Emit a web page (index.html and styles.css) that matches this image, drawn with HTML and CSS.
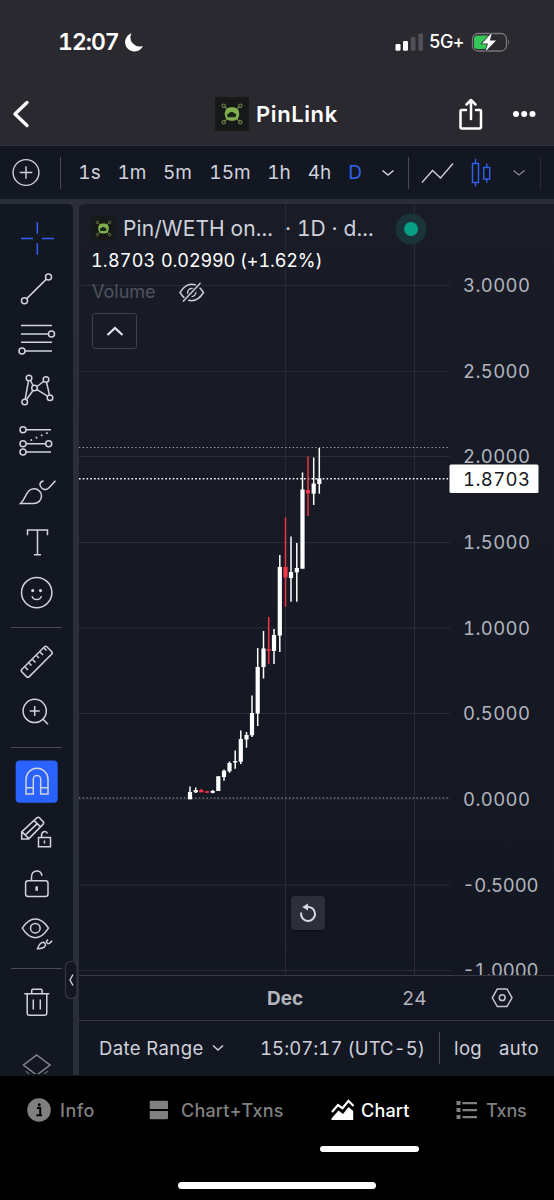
FILE: index.html
```html
<!DOCTYPE html>
<html lang="en">
<head>
<meta charset="utf-8">
<title>PinLink chart</title>
<link rel="stylesheet" href="styles.css">
</head>
<body>
<svg width="0" height="0" class="defs">
  <symbol id="pin" viewBox="0 0 34 34">
    <rect width="34" height="34" rx="2" fill="#171918"/>
    <g fill="none" stroke="#6f7f45" stroke-width="1.1">
      <path d="M9.500 9.500l4 4M24.500 9.500l-4 4M9.500 24.500l4-4M24.500 24.500l-4-4"/>
      <circle cx="8.700" cy="8.700" r="1.700"/><circle cx="25.300" cy="8.700" r="1.700"/><circle cx="8.700" cy="25.300" r="1.700"/><circle cx="25.300" cy="25.300" r="1.700"/>
    </g>
    <rect x="9.800" y="10.200" width="14.400" height="13.600" rx="6" fill="#80b04f"/>
    <path d="M13 20.300q-2.200-1.800 0-3.500 1.500-.3 2-1.500 2.500-1.500 4.300 1 2.500.3 1.700 2.800l-1 1.200z" fill="#17251a"/>
  </symbol>
</svg>
<div class="phone">
  <header class="top">
    <div class="status">
      <div class="clock"><span class="time">12:07</span>
        <svg width="20" height="20" viewBox="124 31 20 20"><path d="M131.500 32.300a9.300 9.300 0 1 0 11.500 12.400 9 9 0 0 1-11.500-12.400z" fill="#fff"/></svg>
      </div>
      <div class="signal">
        <svg width="30" height="20" viewBox="393 31 30 20"><rect x="394.500" y="43" width="5" height="6.800" rx="1.300" fill="#fff"/><rect x="402" y="40" width="5" height="9.800" rx="1.300" fill="#fff"/><rect x="409.800" y="36" width="4.700" height="13.800" rx="1.300" fill="#515056"/><rect x="417.300" y="32.500" width="4.700" height="17.300" rx="1.300" fill="#515056"/></svg>
        <span class="net">5G+</span>
        <svg width="40" height="22" viewBox="471 30 40 22"><rect x="472.500" y="32.500" width="34" height="17.500" rx="5.500" fill="none" stroke="#77767b" stroke-width="1.300"/><path d="M477.500 34.500H488V48H477.500a3.500 3.500 0 0 1-3.500-3.500V38a3.500 3.500 0 0 1 3.500-3.500z" fill="#36c759"/><path d="M508.300 38.500q2.200 2.600 0 5z" fill="#77767b"/><path d="M492 31.500l-10 11h6l-2.500 8 10.500-11h-6.200z" fill="#fff" stroke="#2a292f" stroke-width="1.500" paint-order="stroke"/></svg>
      </div>
    </div>
    <div class="title">
      <svg width="40" height="34" viewBox="0 97 40 34"><path d="M27 102.500L15 114l12 11.500" fill="none" stroke="#fff" stroke-width="3.300" stroke-linecap="round" stroke-linejoin="round"/></svg>
      <div class="name"><svg width="34" height="34"><use href="#pin"/></svg><span>PinLink</span></div>
      <div class="acts">
        <svg width="28" height="34" viewBox="457 97 28 34" fill="none" stroke="#fff" stroke-width="2.500" stroke-linecap="round" stroke-linejoin="round"><path d="M466 110h-4.500q-1 0-1 1v16q0 1.500 1.500 1.500h17.500q1.500 0 1.500-1.500v-16q0-1-1-1H476M471 119v-18.500M466.500 104.500l4.500-4.500 4.500 4.500"/></svg>
        <svg width="26" height="8" viewBox="511 110 26 8" fill="#fff"><circle cx="516" cy="114" r="3"/><circle cx="524.200" cy="114" r="3"/><circle cx="532.500" cy="114" r="3"/></svg>
      </div>
    </div>
  </header>

  <nav class="intervals">
    <svg width="30" height="30" viewBox="11 157 30 30" fill="none" stroke="#d0d3de" stroke-width="1.400"><circle cx="26" cy="171.500" r="12.900"/><path d="M26 165.200v12.600M19.700 171.500h12.600"/></svg>
    <i class="bar"></i>
    <span>1s</span><span>1m</span><span>5m</span><span>15m</span><span>1h</span><span>4h</span><span class="on">D</span>
    <svg width="14" height="8" viewBox="0 0 14 8"><path d="M1.500 1.500L7 6l5.500-4.500" fill="none" stroke="#d0d3de" stroke-width="1.500"/></svg>
    <i class="bar"></i>
    <svg width="34" height="24" viewBox="422 160 34 24"><path d="M423 181.500l10.500-12 8 7.500 12.500-14.500" fill="none" stroke="#d0d3de" stroke-width="1.300"/></svg>
    <svg width="22" height="30" viewBox="470 157 22 30" fill="none" stroke="#3161ef" stroke-width="1.400"><rect x="472.500" y="162.500" width="6" height="19"/><rect x="483.700" y="166.500" width="6" height="11.500"/><path d="M475.500 158v4.500m0 19v4M486.700 162.500v4m0 11.500v3.500"/></svg>
    <svg width="14" height="8" viewBox="0 0 14 8"><path d="M1.500 1.500L7 6l5.500-4.500" fill="none" stroke="#888b94" stroke-width="1.300"/></svg>
    <i class="bar dim"></i>
  </nav>

  <main class="work">
    <aside class="tools">
      <svg class="tool" viewBox="0 213.200 74 50.600"><path class="blue" d="M21 238.700h12M42 238.700h12M37.300 222.500V234M37.300 243.500V255"/></svg>
      <svg class="tool" viewBox="0 263.800 74 50.600"><path d="M26.700 298.400l19.700-19.500"/><circle cx="24.500" cy="300.500" r="3"/><circle cx="48.500" cy="276.700" r="3"/></svg>
      <svg class="tool" viewBox="0 314.400 74 50.600"><path d="M21 326h31M21 334.500h27.500M21 342.700h31M25 351.300h27"/><circle cx="51.500" cy="334.500" r="3"/><circle cx="22" cy="351.300" r="3"/></svg>
      <svg class="tool" viewBox="0 365 74 50.600"><path d="M28.500 381l-3.300 18M30.500 380.500l2.500 5M26.500 399.500l6.500-9M37 386.500l6.500-5M37 389.700l10.500 6.500M46.600 382.500l2.800 12.300"/><circle cx="29" cy="378" r="2.800"/><circle cx="46" cy="379.500" r="2.800"/><circle cx="34.500" cy="388" r="2.800"/><circle cx="24.700" cy="402" r="2.800"/><circle cx="50" cy="397.700" r="2.800"/></svg>
      <svg class="tool" viewBox="0 415.600 74 50.600"><path d="M26 430.300h25M26 444.300h19.700M26 452.700h25"/><path d="M30.500 441l18-8" stroke-dasharray="1.700 4" stroke-width="1.700"/><circle cx="23" cy="430.300" r="3"/><circle cx="23" cy="444.300" r="3"/><circle cx="48.700" cy="444.300" r="3"/><circle cx="23" cy="452.700" r="3"/></svg>
      <svg class="tool" viewBox="0 466.200 74 50.600"><path d="M20.500 503.700C26 499 26 489 34 489c4.500 0 7.500 3.500 7.500 7.300 0 4.200-3.500 7.400-8 7.400zM43.500 481c-4.500 1.500-4.500 5-1.500 7.500 3 2.500 5 1.500 7-.500l6.500-7"/></svg>
      <svg class="tool" viewBox="0 516.800 74 50.600"><path d="M27.500 535v-5.300h20V535M37.500 529.700v24.800M34 554.500h7"/></svg>
      <svg class="tool" viewBox="0 567.400 74 50.600"><circle cx="36.700" cy="593" r="15.200"/><path d="M32 596.500q1 3.500 4.700 3.500t4.700-3.500"/><g class="solid"><circle cx="32.700" cy="591" r="1.600"/><circle cx="40.500" cy="591" r="1.600"/></g></svg>
      <hr>
      <svg class="tool" viewBox="0 636 74 50.600"><rect x="19" y="656.600" width="35.500" height="10.400" rx="2" transform="rotate(-45 36.750 661.800)"/><path d="M25 667l3 3M29 663l2.500 2.500M32.500 659.500l3 3M36.500 655.500l2.500 2.500M40 652l3 3M44 648l2.500 2.500"/></svg>
      <svg class="tool" viewBox="0 686.600 74 50.600"><circle cx="34.700" cy="710.500" r="11.600"/><path d="M34.700 705.500v10M29.700 710.500h10M43 718.800l5 5"/></svg>
      <hr>
      <svg class="tool" viewBox="0 756 74 50.600"><rect class="tile" x="15.700" y="760.600" width="42" height="42.200" rx="4"/><path d="M26 794v-14.800a11 11 0 0 1 22 0V794h-7.300v-14.800a3.700 3.700 0 0 0-7.400 0V794zM26 787.700h7.300M40.700 787.700H48"/></svg>
      <svg class="tool" viewBox="0 806.600 74 50.600"><path d="M21.700 838.500v-7l15-14q1.500-1.500 3 0l3.300 3.500q1.500 1.500 0 3l-14.300 14.500zM22 831.500l6.700 6.500M34 820l6.500 6.500M25.500 834.500l12-11.500"/><path d="M38.500 837h12v9.300h-12zM41.500 837v-2.500q.5-3.500 3.300-3.500 2 0 2.700 2M44.500 840v3"/></svg>
      <svg class="tool" viewBox="0 857.200 74 50.600"><rect x="25.600" y="881" width="22.400" height="15.800" rx="2.500"/><path d="M31.500 881v-3.500c0-8 9.500-8.500 10.500-1.500"/><path d="M36.700 886.500v4.500" stroke-width="2.500"/></svg>
      <svg class="tool" viewBox="0 907.800 74 50.600"><path d="M22.300 928Q28 918.700 35.300 918.700T48.500 928Q42.500 937.500 35.300 937.500T22.300 928z"/><circle cx="35.300" cy="928" r="4.800"/><path d="M37.500 948.500q2.300-6.500 6-6.500 3 1.500 1.500 4-1.500 2.500-7.500 2.500zM48 939.500q-3 2 0 4l1.500-.3 2.700-2.700"/></svg>
      <hr>
      <svg class="tool" viewBox="0 978 74 50.600"><path d="M24.300 994.800h25M31.700 994.500v-3q0-1.200 1.200-1.200h8q1.200 0 1.200 1.200v3M27.200 995v19q0 2.300 2.300 2.300h15q2.300 0 2.300-2.300v-19M33.300 1000.500v10M40.300 1000.500v10"/></svg>
      <svg class="tool faded" viewBox="0 1041 74 34"><path d="M36.700 1056L50 1066l-12.500 9.500h-1.600L23.500 1066z"/><path d="M25.500 1072l5 4M48 1072l-5 4" opacity=".6"/></svg>
      <svg class="fold" width="14" height="40" viewBox="64 959.500 14 40"><rect x="65.500" y="961" width="11.500" height="37" rx="5" fill="#131722" stroke="#373a45" stroke-width="1.200"/><path d="M73 974l-3 5.500 3 5.500" fill="none" stroke="#d0d3de" stroke-width="1.400"/></svg>
    </aside>

    <section class="panel">
      <div class="plot">
        <svg id="chart" width="475" height="771" viewBox="79 204 475 771">
          <path d="M285.500 204v771M414.500 204v771M79 285.500h371M79 371.300h371M79 456.500h371M79 542.500h371M79 628h371M79 713.500h371M79 799h371M79 885h371M79 970.500h371" stroke="#292c36" fill="none"/>
          <path d="M79 447.500h371M79 798h371" stroke="#a6a8b0" stroke-dasharray="1.300 2.450" stroke-width="1.200"/>
          <path d="M79 478.800h371" stroke="#fff" stroke-dasharray="1.600 2.150" stroke-width="1.500"/>
          <g id="candles"></g>
          <g class="axis">
            <text x="463" y="292" textLength="67">3.0000</text>
            <text x="463" y="377.800" textLength="67">2.5000</text>
            <text x="463" y="463.200" textLength="67">2.0000</text>
            <text x="463" y="549" textLength="67">1.5000</text>
            <text x="463" y="634.500" textLength="67">1.0000</text>
            <text x="463" y="720.200" textLength="67">0.5000</text>
            <text x="463" y="805.800" textLength="67">0.0000</text>
            <text x="462.500" y="891.800" textLength="76">-0.5000</text>
            <text x="462.500" y="977" textLength="76">-1.0000</text>
          </g>
          <rect x="449.500" y="464.500" width="89" height="28.500" rx="1.500" fill="#fff"/>
          <text class="last" x="463" y="485.500" textLength="67">1.8703</text>
        </svg>
        <div class="legend">
          <div class="pair"><svg width="25" height="25"><use href="#pin"/></svg><span class="sym">Pin/WETH on...</span><span class="sym res">· 1D · d...</span>
            <svg width="32" height="32" viewBox="0 0 32 32"><circle cx="16" cy="16" r="15.500" fill="#183438"/><circle cx="16" cy="16" r="7" fill="#089f84"/></svg>
          </div>
          <div class="vals"><span class="price">1.8703</span><span>0.02990 (+1.62%)</span></div>
          <div class="vol"><span>Volume</span>
            <svg width="28" height="22" viewBox="178 280 28 22" fill="none" stroke="#c9ccd6" stroke-width="1.500"><path d="M180 291.500q5-8.200 11.700-8.200t11.800 8.200q-5 8.200-11.800 8.200T180 291.500z"/><circle cx="191.700" cy="291.500" r="4"/><path d="M183.500 301L201 282" stroke="#191c27" stroke-width="4.500"/><path d="M183 300.500L200.500 282"/></svg>
          </div>
          <div class="collapse"><svg width="20" height="12" viewBox="0 0 20 12"><path d="M2.500 10L10 3l7.500 7" fill="none" stroke="#e2e4eb" stroke-width="2.200"/></svg></div>
        </div>
        <div class="reset"><svg width="20" height="20" viewBox="0 0 20 20"><path d="M3.200 9.500A7 7 0 1 0 9 4" fill="none" stroke="#d7d9e2" stroke-width="2"/><path d="M4.200 4L10 .5v7z" fill="#d7d9e2"/></svg></div>
      </div>
      <div class="dates"><b>Dec</b><span>24</span>
        <svg width="24" height="22" viewBox="490 987 24 22" fill="none" stroke="#c4c7d1" stroke-width="1.500"><path d="M497.300 989h9.700l5 8.800-5 8.700h-9.700l-5-8.700z"/><circle cx="502.200" cy="997.700" r="2.900"/></svg>
      </div>
      <div class="foot"><span class="range">Date Range</span>
        <svg width="14" height="8" viewBox="0 0 14 8"><path d="M2 1.500L7 6l5-4.500" fill="none" stroke="#d0d3de" stroke-width="1.500"/></svg>
        <span class="utc">15:07:17 (UTC-5)</span><i class="bar"></i><span class="mode">log</span><span class="mode">auto</span>
      </div>
    </section>
  </main>

  <nav class="tabs">
    <a><svg width="24" height="24" viewBox="0 0 24 24"><circle cx="12" cy="12" r="11.800" fill="#808080"/><path d="M10 10h3.200v7M9.500 17.300h5.500" fill="none" stroke="#000" stroke-width="2"/><circle cx="12.200" cy="6.700" r="1.500"/></svg><span class="t-info">Info</span></a>
    <a><svg width="20" height="20" viewBox="0 0 20 20" fill="#808080"><path d="M2 .7h16q1 0 1 1V9H.7V1.700q0-1 1.300-1zM.7 11H19v7.300q0 1-1 1H2q-1.300 0-1.300-1z"/></svg><span class="t-both">Chart+Txns</span></a>
    <a class="active"><svg width="24" height="24" viewBox="330 1098 24 24"><path d="M332 1112l6-7 4.500 3.300 6-7.500 5 5.200" fill="none" stroke="#fff" stroke-width="2.200"/><path d="M331.500 1120v-1.500l7-8 4.500 3.500 5.500-7 4.700 4v9z" fill="#fff"/></svg><span class="t-chart">Chart</span></a>
    <a><svg width="22" height="20" viewBox="0 0 22 20" fill="#808080"><path d="M.5 1h4v4h-4zM.5 8h4v4h-4zM.5 15h4v4h-4zM6.500 2H21v2.200H6.500zM6.500 9H21v2.200H6.500zM6.500 16H21v2.200H6.500z"/></svg><span class="t-txns">Txns</span></a>
    <i class="under"></i>
    <i class="home"></i>
  </nav>
</div>
<script src="chart.js"></script>
</body>
</html>
```
FILE: styles.css
```css
* { box-sizing: border-box; }
body { margin: 0; background: #000; font-family: Inter, "Liberation Sans", sans-serif; color: #cfd2dc; font-variant-numeric: tabular-nums; }
svg { display: block; flex: none; }
.defs { position: absolute; }
.phone { width: 554px; height: 1200px; display: flex; flex-direction: column; overflow: hidden; }
span, b { white-space: nowrap; }

.top { height: 146px; background: #2a292f; color: #fff; border-bottom: 1px solid #2d313b; }
.status { height: 83px; display: flex; justify-content: space-between; padding: 0 43px 0 58px; align-items: center; }
.clock, .signal { display: flex; align-items: center; }
.time { width: 66px; font-size: 23px; font-weight: 600; letter-spacing: -1px; }
.net { font-size: 18px; font-weight: 500; width: 37px; margin: 0 5px; letter-spacing: -.7px; }
.title { height: 62px; display: grid; grid-template-columns: 215px 1fr auto; align-items: center; }
.name { display: flex; align-items: center; gap: 7px; font-size: 22px; font-weight: 600; letter-spacing: .6px; }
.acts { display: flex; align-items: center; justify-content: flex-end; gap: 26px; padding-right: 17px; }

.intervals { height: 53px; background: #131722; display: grid; align-items: center; justify-items: center; font-size: 19px;
  grid-template-columns: 52px 16px 43px 42px 49px 56px 42px 39px 32px 34px 7px 52px 34px 41px 2px; }
.bar { width: 1px; height: 32px; background: #484b55; }
.dim { background: #292c37; }
.on { color: #3161ef; }

.work { height: 876px; background: #2a2e39; padding-top: 5px; display: flex; gap: 6px; }
.tools { position: relative; width: 73px; height: 871px; background: #131722; border-radius: 0 5px 0 0; padding-top: 9px; }
.tool { width: 74px; height: 50.6px; fill: none; stroke: #d0d3de; stroke-width: 1.5; }
.tool .blue { stroke: #3161ef; }
.tool .tile { fill: #2962ff; stroke: none; }
.tool .solid { fill: #d0d3de; stroke: none; }
.tools hr { border: 0; width: 51px; height: 1px; margin: 9.600px 0 8px 11px; background: #484b55; }
.faded { height: 34px; margin-top: 12px; stroke: #858894; }
.fold { position: absolute; left: 64px; top: 755.500px; }

.panel { flex: 1; background: linear-gradient(#191c27, #131722 90%); border-radius: 5px 0 0 0; overflow: hidden; }
.plot { position: relative; height: 771px; }
.axis { font-size: 18.500px; fill: #b2b5be; }
.last { font-size: 18.500px; fill: #131722; }
.legend { position: absolute; left: 12px; top: 8px; }
.pair { height: 33px; display: flex; align-items: center; }
.sym { font-size: 21px; width: 152px; margin-left: 7px; letter-spacing: .1px; }
.res { width: 91px; margin: 0 19px 0 10px; }
.vals { height: 31px; line-height: 31px; font-size: 18px; color: #fff; letter-spacing: -.1px; }
.price { display: inline-block; width: 70px; letter-spacing: .2px; }
.vol { height: 31px; display: flex; align-items: center; color: #50535d; font-size: 18px; padding-left: 1px; }
.vol span { width: 86px; }
.collapse { margin: 6px 0 0 1px; width: 45px; height: 36px; border: 1px solid #3c3f4a; border-radius: 3px; display: flex; align-items: center; justify-content: center; }
.reset { position: absolute; left: 212px; top: 692px; width: 34px; height: 34px; border-radius: 4px; background: #2c2f3a; display: flex; align-items: center; justify-content: center; box-shadow: 0 1px 3px #0008; }
.dates { height: 45px; border-top: 1px solid #363943; display: flex; align-items: center; font-size: 19px; color: #b2b5be; padding-left: 188px; }
.dates b { width: 135px; }
.dates span { width: 88px; }
.foot { height: 55px; border-top: 1px solid #363943; display: flex; align-items: center; font-size: 18.500px; padding-left: 20px; }
.range { width: 112px; letter-spacing: .4px; }
.utc { width: 167px; margin-left: 35px; letter-spacing: .07px; }
.foot .bar { margin: 0 14px 0 12px; }
.mode { letter-spacing: .4px; }
.foot .bar + .mode { width: 45px; }

.tabs { position: relative; flex: 1; display: grid; grid-template-columns: 122px 181px 126px 1fr; align-items: start; padding: 22px 0 0 27px; font-size: 18px; font-weight: 500; color: #808080; border-top: 1px solid #15171c; }
.tabs a { display: flex; align-items: center; height: 24px; }
.tabs .t-info { margin-left: 9px; letter-spacing: .5px; }
.tabs .t-both { margin-left: 12px; letter-spacing: .2px; }
.tabs .t-chart { margin-left: 7px; letter-spacing: .2px; }
.tabs .t-txns { margin-left: 8px; letter-spacing: -.2px; }
.tabs .active { color: #fff; }
.under, .home { position: absolute; background: #fff; border-radius: 4px; }
.under { left: 320px; top: 70px; width: 99px; height: 6px; }
.home { left: 178px; top: 106px; width: 198px; height: 7px; }
```
FILE: chart.js
```javascript
// x, wick top, body top, body bottom, wick bottom, falling
const candles = [
  [190, 786.5, 792, 799.3, 799.3], [195.7, 787.5, 790, 792.3, 793], [201.3, 789, 790, 792.3, 792.3, 1],
  [207, 791.2, 791.2, 792.7, 792.7, 1], [212.7, 790.2, 790.8, 792.8, 793.3], [218.3, 776.3, 776.3, 791, 791],
  [224, 769.5, 770.7, 777, 780.8], [229.5, 761.5, 763, 771.3, 772.8], [235.2, 750.5, 761, 762.5, 768.7],
  [240.8, 730.5, 739, 761.7, 764], [246.5, 732, 735, 739.5, 747.7], [252, 695.5, 713, 735.3, 737],
  [257.7, 648, 667, 713.5, 726], [263.5, 631, 648.5, 667, 678.5], [268.7, 617, 649, 650.7, 664, 1],
  [274, 629, 635, 651, 664], [279.8, 555, 567, 635.5, 652], [285.5, 517.5, 567, 577.5, 606.7, 1],
  [291, 536.5, 572, 578, 601.7], [296.8, 543, 568, 572.3, 601.7], [302.5, 472.5, 489.5, 568.7, 568.7],
  [308, 456.5, 490, 493.3, 516, 1], [313.7, 457.5, 483.5, 493.7, 505], [319.3, 448, 478.3, 484, 493.7]
];
document.getElementById("candles").innerHTML = candles.map(([x, h, t, b, l, down]) => {
  const c = down ? "#f23645" : "#fff";
  return `<path d="M${x} ${h}V${l}" stroke="${c}" stroke-width="1.5"/><rect x="${x - 2.1}" y="${t}" width="4.2" height="${b - t}" fill="${c}"/>`;
}).join("");
```
